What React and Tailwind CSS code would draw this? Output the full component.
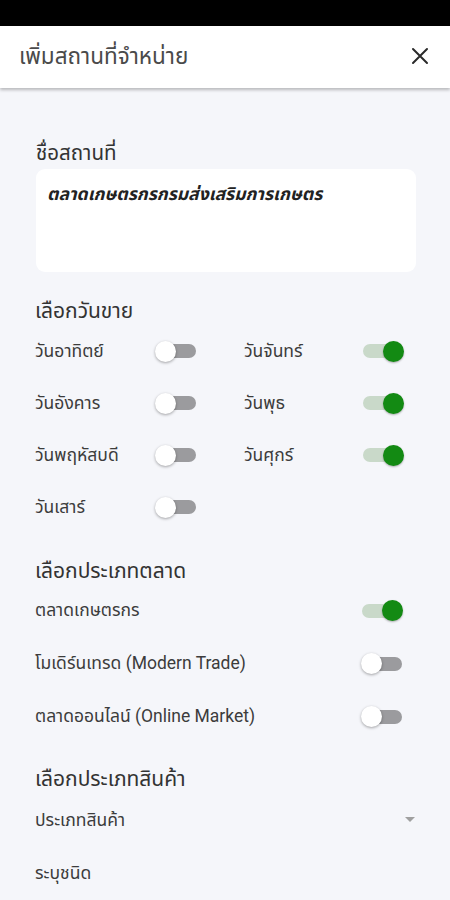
import React from "react";

const font = { fontFamily: 'Roboto, "Noto Sans Thai", "Noto Sans Thai UI", "Noto Sans", sans-serif' };

function Toggle({ on }) {
  return (
    <div className="relative w-[42px] h-[22px] flex items-center">
      <div
        className={
          on
            ? "absolute left-[1px] right-[7px] h-[14px] rounded-full bg-[#c9d9c9]"
            : "absolute left-[7px] right-[1px] h-[14px] rounded-full bg-[#9b9b9e]"
        }
      />
      <div
        className={
          on
            ? "absolute right-0 w-[21px] h-[21px] rounded-full bg-[#138a13] shadow-[0_1px_2px_rgba(0,0,0,0.3)]"
            : "absolute left-0 w-[21px] h-[21px] rounded-full bg-white shadow-[0_1px_3px_rgba(0,0,0,0.35)]"
        }
      />
    </div>
  );
}

function DayCell({ label, on }) {
  return (
    <div className="flex items-center justify-between h-[52px]">
      <span className="text-[17.5px] text-[#3c3c3c]">{label}</span>
      <Toggle on={on} />
    </div>
  );
}

function MarketRow({ label, on }) {
  return (
    <div className="flex items-center justify-between h-[53px]">
      <span className="text-[17.5px] text-[#3c3c3c]">{label}</span>
      <Toggle on={on} />
    </div>
  );
}

export default function App() {
  return (
    <div className="w-[450px] h-[900px] overflow-hidden bg-[#f5f6fa] flex flex-col" style={font}>
      <div className="h-[26px] bg-black shrink-0" />
      <div className="h-[62px] bg-white shrink-0 flex items-center justify-between pl-[19px] pr-[21px] shadow-[0_2px_3px_rgba(0,0,0,0.25)] relative z-10">
        <span className="text-[22.5px] text-[#4a4a4a]">เพิ่มสถานที่จำหน่าย</span>
        <svg width="18" height="18" viewBox="0 0 18 18" className="mt-[-3px]">
          <path d="M2 2 L16 16 M16 2 L2 16" stroke="#2a2a2a" strokeWidth="2" strokeLinecap="round" />
        </svg>
      </div>
      <div className="flex flex-col pl-[35px] pr-[47px] pt-[51px]">
        <div className="h-[28px] leading-[28px] text-[20.5px] text-[#333] pl-[1px]">ชื่อสถานที่</div>
        <div className="mt-[2px] ml-[1px] mr-[-13px] h-[103px] bg-white rounded-[9px] px-[11px] pt-[12px]">
          <span className="text-[17.5px] font-bold italic text-[#222]">ตลาดเกษตรกรกรมส่งเสริมการเกษตร</span>
        </div>
        <div className="mt-[25px] h-[28px] leading-[28px] text-[21px] text-[#333]">เลือกวันขาย</div>
        <div className="grid grid-cols-[162px_160px] gap-x-[47px]">
          <DayCell label="วันอาทิตย์" on={false} />
          <DayCell label="วันจันทร์" on={true} />
          <DayCell label="วันอังคาร" on={false} />
          <DayCell label="วันพุธ" on={true} />
          <DayCell label="วันพฤหัสบดี" on={false} />
          <DayCell label="วันศุกร์" on={true} />
          <DayCell label="วันเสาร์" on={false} />
        </div>
        <div className="mt-[25px] h-[26px] leading-[26px] text-[21px] text-[#333]">เลือกประเภทตลาด</div>
        <MarketRow label="ตลาดเกษตรกร" on={true} />
        <MarketRow label="โมเดิร์นเทรด (Modern Trade)" on={false} />
        <MarketRow label="ตลาดออนไลน์ (Online Market)" on={false} />
        <div className="mt-[22px] h-[28px] leading-[28px] text-[21px] text-[#333]">เลือกประเภทสินค้า</div>
        <div className="flex items-center justify-between h-[54px] mr-[-12px]">
          <span className="text-[17.5px] text-[#3c3c3c]">ประเภทสินค้า</span>
          <svg width="10" height="6" viewBox="0 0 10 6">
            <path d="M0 0 L10 0 L5 5 Z" fill="#a0a0a0" />
          </svg>
        </div>
        <div className="flex items-center h-[52px]">
          <span className="text-[17.5px] text-[#3c3c3c]">ระบุชนิด</span>
        </div>
      </div>
    </div>
  );
}
